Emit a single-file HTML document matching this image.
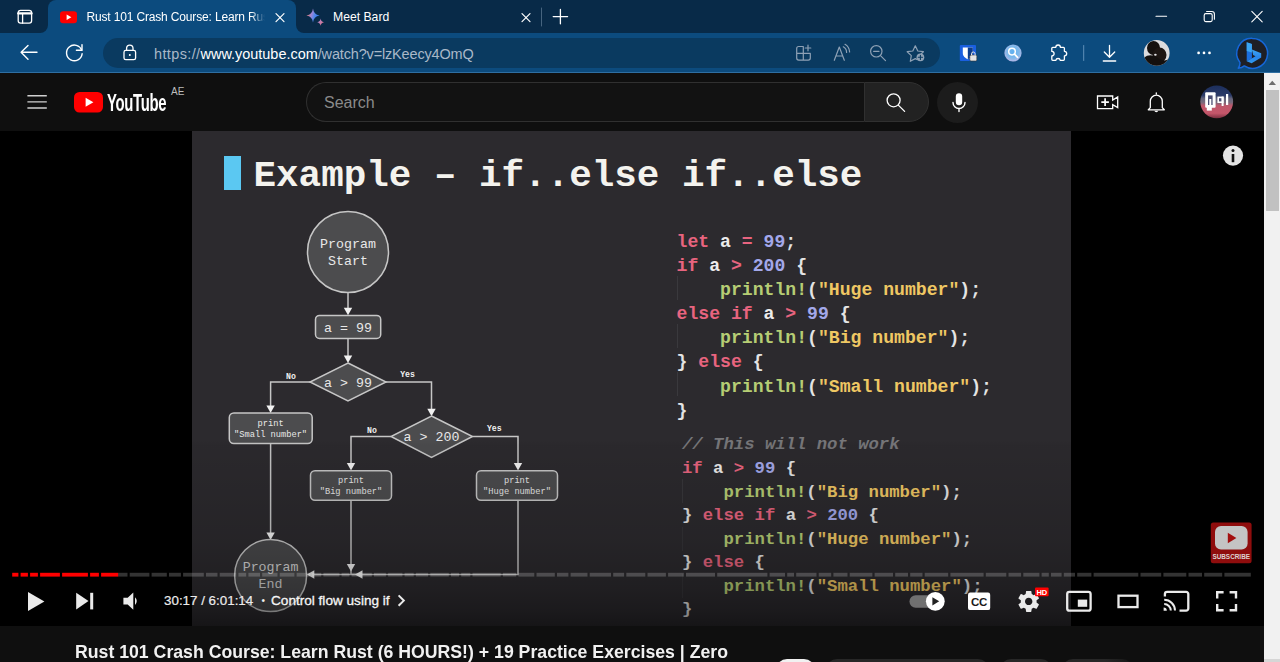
<!DOCTYPE html>
<html lang="en">
<head>
<meta charset="utf-8">
<title>Rust 101 Crash Course: Learn Rust</title>
<style>
*{box-sizing:border-box;margin:0;padding:0}
html,body{width:1280px;height:662px;overflow:hidden;background:#0f0f0f}
body{font-family:"Liberation Sans",sans-serif;position:relative;color:#fff}
.abs{position:absolute}
#tabbar{left:0;top:0;width:1280px;height:33px;background:#082a48}
#toolbar{left:0;top:33px;width:1280px;height:40px;background:#0c4b7e}
#toolbar-line{left:0;top:72px;width:1280px;height:1px;background:#2f6fa2}
#tab1{left:48px;top:0;width:248px;height:33px;background:#0c4b7e;border-radius:8px 8px 0 0}
.tabfoot{width:8px;height:8px;top:25px;background:#0c4b7e}
.tabfoot i{display:block;width:8px;height:8px;background:#082a48}
#tabfootL{left:40px}#tabfootL i{border-radius:0 0 8px 0}
#tabfootR{left:296px}#tabfootR i{border-radius:0 0 0 8px}
.tabtitle{font-size:12px;letter-spacing:-.16px;color:#fff;white-space:nowrap;top:10px;line-height:15px}
#addr{left:103px;top:38px;width:837px;height:30px;border-radius:15px;background:#0a3a60}
#url{left:154px;top:45.9px;font-size:14.45px;line-height:17px;color:#a9b8c8;white-space:nowrap}
#url b{font-weight:normal;color:#fff}
#ythead{left:0;top:73px;width:1264px;height:58px;background:#0f0f0f}
#player{left:0;top:131px;width:1264px;height:494.7px;background:#000;overflow:hidden}
#video{left:192px;top:0;width:879px;height:494.7px;background:#2c2a2e;overflow:hidden}
#below{left:0;top:625.7px;width:1264px;height:37px;background:#0f0f0f}
#scroll{left:1264px;top:73px;width:16px;height:589px;background:#f1f1f1}
#thumb{left:2px;top:17px;width:13px;height:121.4px;background:#c1c1c1}
.mono{font-family:"Liberation Mono",monospace;font-weight:bold}
#slidetitle{left:61.5px;top:23.2px;font-size:37.58px;line-height:44px;color:#f4f3ee;white-space:pre}
#bluebar{left:32px;top:24.5px;width:16.5px;height:34.5px;background:#5bc8f2}
pre.code{position:absolute;font-family:"Liberation Mono",monospace;font-weight:bold;white-space:pre;color:#ececec}
#code1{left:484.5px;top:98.7px;font-size:18.14px;line-height:24.15px}
#code2{left:490px;top:302.4px;font-size:17.28px;line-height:23.57px}
.k{color:#e8647f}.n{color:#a3a8ea}.f{color:#b6cd74}.s{color:#efc763}.c{color:#77777a;font-style:italic}.p{color:#e4e4e4}
#grad{left:0;bottom:0;width:1264px;height:186px;background:linear-gradient(to bottom,rgba(0,0,0,0) 0%,rgba(0,0,0,.04) 2.7%,rgba(0,0,0,.1) 32%,rgba(0,0,0,.15) 54%,rgba(0,0,0,.195) 64.600%,rgba(0,0,0,.29) 81%,rgba(0,0,0,.38) 91.500%,rgba(0,0,0,.5) 100%)}
#title{left:75px;top:640.4px;font-size:19px;font-weight:bold;line-height:24px;white-space:nowrap;color:#f1f1f1;transform-origin:0 50%;transform:scaleX(.9306)}
.chip{top:658.7px;height:36px;border-radius:11px;background:#272727}
#search{left:306px;top:8.8px;width:558px;height:40.6px;border:1px solid #303030;border-right:none;border-radius:20px 0 0 20px;background:#121212}
#searchbtn{left:864px;top:8.8px;width:65px;height:40.6px;border:1px solid #303030;border-radius:0 20px 20px 0;background:#222}
#mic{left:937px;top:8.6px;width:41px;height:41px;border-radius:20.5px;background:#1c1c1c}
#time{left:164px;top:461.6px;font-size:13.38px;line-height:16px;white-space:nowrap;color:#eee}
</style>
</head>
<body>
<!-- ===== browser chrome ===== -->
<div id="tabbar" class="abs"></div>
<div id="toolbar" class="abs"></div>
<div id="toolbar-line" class="abs"></div>
<div id="tabfootL" class="abs tabfoot"><i></i></div>
<div id="tabfootR" class="abs tabfoot"><i></i></div>
<div id="tab1" class="abs"></div>
<div class="abs tabtitle" id="t1" style="left:86.5px;width:178px;overflow:hidden;-webkit-mask-image:linear-gradient(to right,#000 92%,transparent 100%);mask-image:linear-gradient(to right,#000 92%,transparent 100%)">Rust 101 Crash Course: Learn Rust (6 HOURS!)</div>
<div class="abs tabtitle" id="t2" style="left:333px;font-size:12.2px;letter-spacing:0">Meet Bard</div>
<div id="addr" class="abs"></div>
<div id="url" class="abs"><span style="letter-spacing:.4px">https://</span><b>www.youtube.com</b><span style="letter-spacing:-.13px">/watch?v=lzKeecy4OmQ</span></div>
<!--CI0-->
<svg class="abs" style="left:0;top:0" width="1280" height="73" viewBox="0 0 1280 73" fill="none" stroke-linecap="round" stroke-linejoin="round">
<g stroke="#ffffff" stroke-width="1.3"><rect x="18.2" y="10.4" width="13.4" height="12.8" rx="2.4"/><path d="M18.2 13.4h13.4" stroke-width="2.2"/><path d="M22.6 13.4v9.8"/></g>
<rect x="60" y="11.2" width="17" height="12" rx="3.2" fill="#ff0000"/><path d="M66.6 14.4l4.8 2.8-4.8 2.8z" fill="#fff"/>
<path d="M276 13.7l8 8M284 13.7l-8 8" stroke="#ffffff" stroke-width="1.2"/>
<path d="M522 13.7l8 8M530 13.7l-8 8" stroke="#ffffff" stroke-width="1.2"/>
<defs><linearGradient id="bg1" x1="0" y1=".35" x2="1" y2=".65"><stop offset="0" stop-color="#ee7a62"/><stop offset=".38" stop-color="#9a86d8"/><stop offset=".62" stop-color="#4f86ec"/><stop offset="1" stop-color="#2f7cf0"/></linearGradient><linearGradient id="bg2" x1="0" y1="0" x2="1" y2="1"><stop offset="0" stop-color="#9b8ae0"/><stop offset="1" stop-color="#f0707a"/></linearGradient></defs>
<path d="M313 8.6c.5 4 2.6 6.3 6.6 6.9-4 .6-6.100 2.900-6.600 6.900-.5-4-2.600-6.300-6.600-6.900 4-.6 6.100-2.900 6.600-6.900z" fill="url(#bg1)"/>
<path d="M320.600 18.600c.3 2.100 1.300 3.200 3.400 3.600-2.100.4-3.100 1.500-3.400 3.600-.3-2.100-1.300-3.200-3.400-3.600 2.100-.4 3.100-1.500 3.400-3.600z" fill="url(#bg2)"/>
<path d="M541.5 8v18" stroke="#46647f" stroke-width="1"/>
<path d="M553.2 16.6h14.400M560.400 9.400v14.400" stroke="#ffffff" stroke-width="1.3"/>
<path d="M1156 16.300h10.600" stroke="#ffffff" stroke-width="1.1"/>
<rect x="1204.200" y="13.600" width="8" height="8" rx="1.600" stroke="#ffffff" stroke-width="1.100"/><path d="M1206.600 11.500h5.200a2.600 2.600 0 0 1 2.600 2.600v5.200" stroke="#ffffff" stroke-width="1.100"/>
<path d="M1251.800 11.400l10.400 10.400M1262.200 11.400l-10.400 10.400" stroke="#ffffff" stroke-width="1.100"/>
<path d="M37 52.300H21.200M28 45.400l-6.900 6.900 6.900 6.900" stroke="#ffffff" stroke-width="1.400"/>
<path d="M81.700 50.300a7.800 7.800 0 1 0 .4 3.500" stroke="#ffffff" stroke-width="1.400"/><path d="M82 44.600v5.600h-5.600" stroke="#ffffff" stroke-width="1.400"/>
<rect x="124" y="50.400" width="11.600" height="9.300" rx="1.800" stroke="#ffffff" stroke-width="1.300"/><path d="M126.600 50.200v-1.900a3.200 3.200 0 0 1 6.400 0v1.900" stroke="#ffffff" stroke-width="1.300"/><circle cx="129.800" cy="55" r="1" fill="#ffffff"/>
<g stroke="#8ea1b5" stroke-width="1.200"><path d="M803.300 46.500h-4.600a2 2 0 0 0-2 2v9.600a2 2 0 0 0 2 2h9.600a2 2 0 0 0 2-2v-4.700M803.300 46.500v13.600M796.700 53.400h13.600"/><path d="M808 45.200v5.600M805.200 48h5.600"/></g>
<g stroke="#8ea1b5" stroke-width="1.200"><path d="M834.300 60.300l5-13.300 5 13.300M836 56h6.600"/><path d="M843.300 46.800a6.500 6.500 0 0 1 3.300 5.600M845 44.300a9.500 9.500 0 0 1 4.600 7.700"/></g>
<g stroke="#8ea1b5" stroke-width="1.200"><circle cx="876.300" cy="51.300" r="5.700"/><path d="M880.500 55.600l5 5M873.600 51.300h5.400"/></g>
<path d="M915.300 45.800l2.500 5.200 5.600.700-4 3.900.5 2M915.300 45.800l-2.500 5.200-5.600.700 4.100 3.900-1 5.700 5-2.700 1.700.9" stroke="#8ea1b5" stroke-width="1.200"/><circle cx="920.400" cy="57.300" r="3.900" fill="#8ea1b5"/><path d="M918.300 57.300h4.200M920.400 55.200v4.200" stroke="#0a3a60" stroke-width="1.100"/>
<rect x="959.800" y="45" width="16.200" height="16" rx="1" fill="#1a5fe0"/><path d="M962.800 47.600h10v5.400c0 3.300-2.400 5-5 6.200-2.600-1.200-5-2.900-5-6.200z" fill="#fff" stroke="none"/><path d="M967.800 47.600h5v5.400c0 3.300-2.400 5-5 6.200z" fill="#0c3c8c" stroke="none"/><rect x="969.800" y="55" width="7" height="6" rx="1.200" fill="#e6e6e6" stroke="#333" stroke-width=".6"/><path d="M971.500 55v-1.200a1.800 1.800 0 0 1 3.600 0v1.200" stroke="#e6e6e6" stroke-width="1"/>
<defs><radialGradient id="sg" cx=".5" cy=".45" r=".6"><stop offset="0" stop-color="#5fb0f0"/><stop offset=".6" stop-color="#7fb8ea"/><stop offset="1" stop-color="#c7b7e6"/></radialGradient></defs><circle cx="1013" cy="53" r="8.600" fill="url(#sg)"/><circle cx="1012" cy="51.600" r="3.300" stroke="#fff" stroke-width="1.500"/><path d="M1014.500 54.200l3.100 3.200" stroke="#fff" stroke-width="1.700"/>
<path d="M1055.800 47.300a2.300 2.300 0 0 1 4.600 0h3a1 1 0 0 1 1 1v3a2.300 2.300 0 0 1 0 4.600v3.400a1 1 0 0 1-1 1h-3.100a2.300 2.300 0 0 0-4.500 0h-3a1 1 0 0 1-1-1v-3.300a2.300 2.300 0 0 0 0-4.600v-3.100a1 1 0 0 1 1-1z" stroke="#ffffff" stroke-width="1.300"/>
<path d="M1083.700 45.500v15" stroke="#5f8fb8" stroke-width="1"/>
<path d="M1109.500 45.300v11.600M1104.300 52l5.200 5.200 5.200-5.200M1103.300 61h12.400" stroke="#ffffff" stroke-width="1.300"/>
<defs><clipPath id="av"><circle cx="1156.700" cy="52.900" r="12.900"/></clipPath></defs><g clip-path="url(#av)"><rect x="1143" y="39" width="28" height="28" fill="#dcdcde"/><ellipse cx="1153.500" cy="48" rx="6.500" ry="7" fill="#15110f"/><ellipse cx="1159.500" cy="55" rx="7" ry="7.500" fill="#1d1613"/><path d="M1144 58c4-4 10-3 14 0s8 3 11 1v9h-25z" fill="#14100e"/><ellipse cx="1155.400" cy="54.800" rx="1.300" ry="1" fill="#e8e8ea"/></g>
<g fill="#ffffff"><circle cx="1198.600" cy="52.900" r="1.350"/><circle cx="1204" cy="52.900" r="1.350"/><circle cx="1209.500" cy="52.900" r="1.350"/></g>
<defs><linearGradient id="bb" x1="0" y1="0" x2="0" y2="1"><stop offset="0" stop-color="#3aa4f2"/><stop offset=".55" stop-color="#2a86ea"/><stop offset="1" stop-color="#2f9af0"/></linearGradient></defs>
<path d="M1252.600 38.400a15 15 0 1 1-8.300 27.500c-1.600 1.400-3.600 2.200-6 2.400 1.200-1.700 1.800-3.600 1.700-5.700a15 15 0 0 1 12.600-24.200z" fill="#1e1f25" stroke="#1667d9" stroke-width="1.500"/>
<path d="M1246.700 42.300l5.200 1.800v14.300l-5.200 2.800z" fill="#1b6fe0"/><path d="M1246.700 42.300l5.200 1.800v8.500l-5.200-1.500z" fill="#3aa4f2"/>
<path d="M1251.900 49.600l9.300 3.600v4.300l-9.600 5.700-4.900-2 8.800-5-2.400-1.100z" fill="url(#bb)"/>
</svg>
<!--CI1-->

<!-- ===== youtube header ===== -->
<div id="ythead" class="abs">
  <div id="search" class="abs"></div>
  <div class="abs" style="left:324px;top:19.600px;font-size:16px;line-height:20px;color:#8a8a8a">Search</div>
  <div id="searchbtn" class="abs"></div>
  <div id="mic" class="abs"></div>
  <!--YI0-->
<svg class="abs" style="left:0;top:0" width="1265" height="58" viewBox="0 73 1265 58" fill="none" stroke-linecap="round" stroke-linejoin="round">
<path d="M27.400 95.800h19.400M27.400 101.900h19.400M27.400 108h19.400" stroke="#d0d0d0" stroke-width="1.400" stroke-linecap="butt"/>
<rect x="74" y="92" width="29" height="20.500" rx="5.500" fill="#ff0000"/><path d="M85.600 97.700l7.800 4.500-7.800 4.500z" fill="#fff"/>
<circle cx="893.600" cy="100.300" r="6.500" stroke="#fff" stroke-width="1.300"/><path d="M898.300 105.100l6.300 6.300" stroke="#fff" stroke-width="1.300"/>
<rect x="955.800" y="93.200" width="6.400" height="12" rx="3.200" fill="#fff"/><path d="M953 102.500a6 6 0 0 0 12 0M959 108.600v3" stroke="#fff" stroke-width="1.400"/>
<path d="M1097.500 96h15.200v4l5-3v10.600l-5-3v4h-15.200z" stroke="#fff" stroke-width="1.300" stroke-linejoin="miter"/><path d="M1105.100 98.300v7.600M1101.300 102.100h7.600" stroke="#fff" stroke-width="1.700" stroke-linecap="butt"/>
<path d="M1156.300 92.800v1.200M1150.300 107.600v-6.400a6 6 0 0 1 12 0v6.400l2 2.200h-16z" stroke="#fff" stroke-width="1.300"/><path d="M1154.300 110.800a2.100 2.100 0 0 0 4 0z" fill="#fff"/>
<defs><linearGradient id="avg" x1="0" y1="0" x2="0" y2="1"><stop offset="0" stop-color="#1c2f5c"/><stop offset=".3" stop-color="#2a3a68"/><stop offset=".4" stop-color="#62637a"/><stop offset=".52" stop-color="#7a6a7c"/><stop offset=".62" stop-color="#c0586c"/><stop offset=".85" stop-color="#c4566a"/><stop offset="1" stop-color="#7a2f40"/></linearGradient></defs><circle cx="1216.700" cy="101.800" r="16.400" fill="url(#avg)"/>
<g fill="#fff"><rect x="1205.200" y="92.200" width="10.400" height="15.600" rx="1"/><rect x="1206.800" y="107" width="5" height="3.600"/><rect x="1217.400" y="96.600" width="6.200" height="6.400"/><rect x="1221.600" y="96.600" width="2" height="9.400"/><rect x="1226" y="94" width="2.200" height="11"/></g><g fill="#4b4f74"><rect x="1208" y="95.400" width="4.600" height="9.600"/><rect x="1219" y="98.200" width="2.400" height="3.200"/></g><rect x="1209.300" y="99" width="2" height="8.600" fill="#fff"/>
</svg>
<div class="abs" id="ytword" style="left:107px;top:15.500px;font-size:24px;line-height:28px;font-weight:bold;color:#fff;white-space:nowrap;transform-origin:0 50%;transform:scaleX(.62);letter-spacing:-.5px">YouTube</div>
<div class="abs" style="left:171px;top:13.300px;font-size:10px;line-height:12px;color:#bdbdbd;white-space:nowrap">AE</div>
<!--YI1-->
</div>

<!-- ===== player ===== -->
<div id="player" class="abs">
  <div id="video" class="abs">
    <div id="bluebar" class="abs"></div>
    <div id="slidetitle" class="abs mono">Example – if..else if..else</div>
    <!--FLOWSTART-->
<svg class="abs" style="left:0;top:0" width="878" height="494" viewBox="0 0 878 494" font-family="Liberation Mono, monospace" text-anchor="middle">
<g fill="none" stroke="#c6c6c6" stroke-width="1.5">
<polyline points="156.0,162.0 156.0,179.0"/>
<polyline points="156.0,207.4 156.0,227.0"/>
<polyline points="118.0,251.0 78.6,251.0 78.6,277.0"/>
<polyline points="194.0,251.0 239.5,251.0 239.5,280.0"/>
<polyline points="199.0,305.5 159.0,305.5 159.0,334.0"/>
<polyline points="280.5,305.5 326.0,305.5 326.0,334.0"/>
<polyline points="78.6,312.5 78.6,404.0"/>
<polyline points="159.0,369.6 159.0,443.5"/>
<polyline points="326.0,369.6 326.0,443.5 119.0,443.5"/>
</g>
<g fill="#f2f2f2" stroke="none">
<polygon points="156.0,184.2 151.8,176.7 160.2,176.7"/>
<polygon points="156.0,232.0 151.8,224.5 160.2,224.5"/>
<polygon points="78.6,282.0 74.4,274.5 82.8,274.5"/>
<polygon points="239.5,285.2 235.3,277.7 243.7,277.7"/>
<polygon points="159.0,339.6 154.8,332.1 163.2,332.1"/>
<polygon points="326.0,339.6 321.8,332.1 330.2,332.1"/>
<polygon points="78.6,409.0 74.4,401.5 82.8,401.5"/>
<polygon points="159.0,440.5 154.8,433.0 163.2,433.0"/>
<polygon points="163.0,443.5 170.5,439.3 170.5,447.7"/>
<polygon points="114.8,443.5 122.3,439.3 122.3,447.7"/>
</g>
<g fill="#4c4c4e" stroke="#c6c6c6" stroke-width="1.5">
<circle cx="156" cy="121" r="40.5"/>
<rect x="123.5" y="184.4" width="65.2" height="23.0" rx="4"/>
<polygon points="156.0,232.0 194.0,251.0 156.0,270.0 118.0,251.0"/>
<rect x="37.3" y="282.0" width="82.9" height="30.5" rx="4.5"/>
<polygon points="239.5,285.0 280.5,305.5 239.5,326.5 199.0,305.5"/>
<rect x="118.5" y="339.8" width="81.0" height="29.5" rx="4.5"/>
<rect x="284.5" y="339.8" width="81.0" height="29.5" rx="4.5"/>
<circle cx="78.6" cy="444.5" r="36" fill-opacity="0.92"/>
</g>
<text x="156.0" y="117.3" font-size="13.3" fill="#e8e8e8" font-weight="normal" xml:space="preserve">Program</text>
<text x="156.0" y="134.3" font-size="13.3" fill="#e8e8e8" font-weight="normal" xml:space="preserve">Start</text>
<text x="156.0" y="200.6" font-size="13.3" fill="#e8e8e8" font-weight="normal" xml:space="preserve">a = 99</text>
<text x="156.0" y="255.6" font-size="13.3" fill="#e8e8e8" font-weight="normal" xml:space="preserve">a &gt; 99</text>
<text x="239.5" y="310.2" font-size="13.3" fill="#e8e8e8" font-weight="normal" xml:space="preserve">a &gt; 200</text>
<text x="78.6" y="295.0" font-size="8.7" fill="#e8e8e8" font-weight="normal" xml:space="preserve">print</text>
<text x="78.6" y="306.0" font-size="8.7" fill="#e8e8e8" font-weight="normal" xml:space="preserve">"Small number"</text>
<text x="159.0" y="352.3" font-size="8.7" fill="#e8e8e8" font-weight="normal" xml:space="preserve">print</text>
<text x="159.0" y="363.0" font-size="8.7" fill="#e8e8e8" font-weight="normal" xml:space="preserve">"Big number"</text>
<text x="325.0" y="352.3" font-size="8.7" fill="#e8e8e8" font-weight="normal" xml:space="preserve">print</text>
<text x="325.0" y="363.0" font-size="8.7" fill="#e8e8e8" font-weight="normal" xml:space="preserve">"Huge number"</text>
<text x="78.6" y="440.2" font-size="13.3" fill="#d8d8d8" font-weight="normal" xml:space="preserve">Program</text>
<text x="78.6" y="457.4" font-size="13.3" fill="#d8d8d8" font-weight="normal" xml:space="preserve">End</text>
<text x="99.0" y="248.0" font-size="8.2" fill="#f0f0f0" font-weight="bold" xml:space="preserve">No</text>
<text x="215.5" y="246.0" font-size="8.2" fill="#f0f0f0" font-weight="bold" xml:space="preserve">Yes</text>
<text x="180.0" y="302.0" font-size="8.2" fill="#f0f0f0" font-weight="bold" xml:space="preserve">No</text>
<text x="302.3" y="300.0" font-size="8.2" fill="#f0f0f0" font-weight="bold" xml:space="preserve">Yes</text>
</svg>
<!--FLOWEND-->
<div class="abs" style="left:485px;top:145px;width:1px;height:24px;background:#3a393d"></div><div class="abs" style="left:485px;top:193px;width:1px;height:24px;background:#3a393d"></div><div class="abs" style="left:485px;top:241px;width:1px;height:24px;background:#3a393d"></div><div class="abs" style="left:490px;top:348px;width:1px;height:24px;background:#38373b"></div><div class="abs" style="left:490px;top:396px;width:1px;height:24px;background:#343337"></div><div class="abs" style="left:490px;top:443px;width:1px;height:24px;background:#343337"></div>
<pre class="code" id="code1"><span class="k">let</span> a <span class="k">=</span> <span class="n">99</span><span class="p">;</span>
<span class="k">if</span> a <span class="k">&gt;</span> <span class="n">200</span> <span class="p">{</span>
    <span class="f">println!</span><span class="p">(</span><span class="s">"Huge number"</span><span class="p">);</span>
<span class="k">else if</span> a <span class="k">&gt;</span> <span class="n">99</span> <span class="p">{</span>
    <span class="f">println!</span><span class="p">(</span><span class="s">"Big number"</span><span class="p">);</span>
<span class="p">}</span> <span class="k">else</span> <span class="p">{</span>
    <span class="f">println!</span><span class="p">(</span><span class="s">"Small number"</span><span class="p">);</span>
<span class="p">}</span></pre>
<pre class="code" id="code2"><span class="c">// This will not work</span>
<span class="k">if</span> a <span class="k">&gt;</span> <span class="n">99</span> <span class="p">{</span>
    <span class="f">println!</span><span class="p">(</span><span class="s">"Big number"</span><span class="p">);</span>
<span class="p">}</span> <span class="k">else if</span> a <span class="k">&gt;</span> <span class="n">200</span> <span class="p">{</span>
    <span class="f">println!</span><span class="p">(</span><span class="s">"Huge number"</span><span class="p">);</span>
<span class="p">}</span> <span class="k">else</span> <span class="p">{</span>
    <span class="f">println!</span><span class="p">(</span><span class="s">"Small number"</span><span class="p">);</span>
<span class="p">}</span></pre>
  </div>
  <div id="grad" class="abs"></div>
  <!--CT0-->
<svg class="abs" style="left:0;top:0" width="1265" height="494" viewBox="0 131 1265 494" fill="none" font-family="Liberation Sans, sans-serif">
<rect x="12.2" y="572.8" width="6.2" height="3.8" fill="#ff0000"/>
<rect x="20.6" y="572.8" width="7.3" height="3.8" fill="#ff0000"/>
<rect x="30.1" y="572.8" width="7.8" height="3.8" fill="#ff0000"/>
<rect x="40.1" y="572.8" width="19.8" height="3.8" fill="#ff0000"/>
<rect x="62.1" y="572.8" width="25.8" height="3.8" fill="#ff0000"/>
<rect x="90.1" y="572.8" width="8.8" height="3.8" fill="#ff0000"/>
<rect x="101.1" y="572.8" width="17.1" height="3.8" fill="#ff0000"/>
<rect x="118.2" y="572.8" width="9.3" height="3.8" fill="#fff" fill-opacity=".2"/>
<rect x="129.7" y="572.8" width="19.7" height="3.8" fill="#fff" fill-opacity=".2"/>
<rect x="151.6" y="572.8" width="15.2" height="3.8" fill="#fff" fill-opacity=".2"/>
<rect x="169.0" y="572.8" width="11.9" height="3.8" fill="#fff" fill-opacity=".2"/>
<rect x="183.1" y="572.8" width="20.7" height="3.8" fill="#fff" fill-opacity=".2"/>
<rect x="206.0" y="572.8" width="11.5" height="3.8" fill="#fff" fill-opacity=".2"/>
<rect x="219.7" y="572.8" width="16.5" height="3.8" fill="#fff" fill-opacity=".2"/>
<rect x="238.4" y="572.8" width="7.8" height="3.8" fill="#fff" fill-opacity=".2"/>
<rect x="248.4" y="572.8" width="11.6" height="3.8" fill="#fff" fill-opacity=".2"/>
<rect x="262.2" y="572.8" width="15.3" height="3.8" fill="#fff" fill-opacity=".2"/>
<rect x="279.7" y="572.8" width="14.7" height="3.8" fill="#fff" fill-opacity=".2"/>
<rect x="296.6" y="572.8" width="13.4" height="3.8" fill="#fff" fill-opacity=".2"/>
<rect x="312.2" y="572.8" width="9.0" height="3.8" fill="#fff" fill-opacity=".2"/>
<rect x="323.4" y="572.8" width="16.0" height="3.8" fill="#fff" fill-opacity=".2"/>
<rect x="341.6" y="572.8" width="7.8" height="3.8" fill="#fff" fill-opacity=".2"/>
<rect x="351.6" y="572.8" width="20.2" height="3.8" fill="#fff" fill-opacity=".2"/>
<rect x="374.0" y="572.8" width="11.9" height="3.8" fill="#fff" fill-opacity=".2"/>
<rect x="388.1" y="572.8" width="14.3" height="3.8" fill="#fff" fill-opacity=".2"/>
<rect x="404.6" y="572.8" width="9.1" height="3.8" fill="#fff" fill-opacity=".2"/>
<rect x="415.9" y="572.8" width="12.2" height="3.8" fill="#fff" fill-opacity=".2"/>
<rect x="430.3" y="572.8" width="18.5" height="3.8" fill="#fff" fill-opacity=".2"/>
<rect x="451.0" y="572.8" width="8.0" height="3.8" fill="#fff" fill-opacity=".2"/>
<rect x="461.2" y="572.8" width="9.1" height="3.8" fill="#fff" fill-opacity=".2"/>
<rect x="472.5" y="572.8" width="28.2" height="3.8" fill="#fff" fill-opacity=".2"/>
<rect x="502.9" y="572.8" width="13.3" height="3.8" fill="#fff" fill-opacity=".2"/>
<rect x="518.4" y="572.8" width="15.9" height="3.8" fill="#fff" fill-opacity=".2"/>
<rect x="536.5" y="572.8" width="18.3" height="3.8" fill="#fff" fill-opacity=".2"/>
<rect x="557.0" y="572.8" width="11.4" height="3.8" fill="#fff" fill-opacity=".2"/>
<rect x="570.6" y="572.8" width="16.9" height="3.8" fill="#fff" fill-opacity=".2"/>
<rect x="589.7" y="572.8" width="21.3" height="3.8" fill="#fff" fill-opacity=".2"/>
<rect x="613.2" y="572.8" width="10.9" height="3.8" fill="#fff" fill-opacity=".2"/>
<rect x="626.3" y="572.8" width="19.0" height="3.8" fill="#fff" fill-opacity=".2"/>
<rect x="647.5" y="572.8" width="18.4" height="3.8" fill="#fff" fill-opacity=".2"/>
<rect x="668.1" y="572.8" width="15.7" height="3.8" fill="#fff" fill-opacity=".2"/>
<rect x="686.0" y="572.8" width="29.0" height="3.8" fill="#fff" fill-opacity=".2"/>
<rect x="717.2" y="572.8" width="50.2" height="3.8" fill="#fff" fill-opacity=".2"/>
<rect x="769.6" y="572.8" width="15.4" height="3.8" fill="#fff" fill-opacity=".2"/>
<rect x="787.2" y="572.8" width="6.8" height="3.8" fill="#fff" fill-opacity=".2"/>
<rect x="796.2" y="572.8" width="20.3" height="3.8" fill="#fff" fill-opacity=".2"/>
<rect x="818.7" y="572.8" width="12.5" height="3.8" fill="#fff" fill-opacity=".2"/>
<rect x="833.4" y="572.8" width="14.1" height="3.8" fill="#fff" fill-opacity=".2"/>
<rect x="849.7" y="572.8" width="22.7" height="3.8" fill="#fff" fill-opacity=".2"/>
<rect x="874.6" y="572.8" width="18.4" height="3.8" fill="#fff" fill-opacity=".2"/>
<rect x="895.2" y="572.8" width="12.8" height="3.8" fill="#fff" fill-opacity=".2"/>
<rect x="910.2" y="572.8" width="12.3" height="3.8" fill="#fff" fill-opacity=".2"/>
<rect x="924.7" y="572.8" width="23.5" height="3.8" fill="#fff" fill-opacity=".2"/>
<rect x="950.4" y="572.8" width="33.2" height="3.8" fill="#fff" fill-opacity=".2"/>
<rect x="985.8" y="572.8" width="20.5" height="3.8" fill="#fff" fill-opacity=".2"/>
<rect x="1008.5" y="572.8" width="12.6" height="3.8" fill="#fff" fill-opacity=".2"/>
<rect x="1023.3" y="572.8" width="16.1" height="3.8" fill="#fff" fill-opacity=".2"/>
<rect x="1041.6" y="572.8" width="7.2" height="3.8" fill="#fff" fill-opacity=".2"/>
<rect x="1051.0" y="572.8" width="10.6" height="3.8" fill="#fff" fill-opacity=".2"/>
<rect x="1063.8" y="572.8" width="11.2" height="3.8" fill="#fff" fill-opacity=".2"/>
<rect x="1077.2" y="572.8" width="14.2" height="3.8" fill="#fff" fill-opacity=".2"/>
<rect x="1093.6" y="572.8" width="44.7" height="3.8" fill="#fff" fill-opacity=".2"/>
<rect x="1140.5" y="572.8" width="20.7" height="3.8" fill="#fff" fill-opacity=".2"/>
<rect x="1163.4" y="572.8" width="22.9" height="3.8" fill="#fff" fill-opacity=".2"/>
<rect x="1188.5" y="572.8" width="13.5" height="3.8" fill="#fff" fill-opacity=".2"/>
<rect x="1204.2" y="572.8" width="18.0" height="3.8" fill="#fff" fill-opacity=".2"/>
<rect x="1224.4" y="572.8" width="26.4" height="3.8" fill="#fff" fill-opacity=".2"/>
<path d="M28 592v19l16.400-9.500z" fill="#eaeaea"/>
<path d="M76.200 592.800v16.600l12.300-8.300z" fill="#eaeaea"/><rect x="90.200" y="592.800" width="3" height="16.600" fill="#eaeaea"/>
<path d="M123.400 597.800h4.300l5.600-5.400v17.400l-5.600-5.400h-4.300z" fill="#eaeaea"/><path d="M135 597.300a5 5 0 0 1 0 7.600z" fill="#eaeaea"/>
<path d="M398.600 595.400l5.200 5.200-5.200 5.200" stroke="#eaeaea" stroke-width="2"/>
<rect x="909.500" y="595.300" width="33" height="12.400" rx="6.200" fill="#8c8c8c" fill-opacity=".75"/><circle cx="935.300" cy="601.300" r="9.400" fill="#fff"/><path d="M932.400 597.200v8.200l6.800-4.100z" fill="#222"/>
<rect x="968" y="592.500" width="22.200" height="17.600" rx="2.200" fill="#fff"/>
<text x="979.100" y="605.600" font-size="11.500" font-weight="bold" fill="#1b1b1b" text-anchor="middle" letter-spacing="-.3">CC</text>
<path transform="translate(1004.94 577.64) scale(1.32)" d="m 23.94,18.78 c .03,-0.25 .05,-0.51 .05,-0.78 0,-0.27 -0.02,-0.52 -0.05,-0.78 l 1.68,-1.32 c .15,-0.12 .19,-0.33 .09,-0.51 l -1.6,-2.76 c -0.09,-0.17 -0.31,-0.24 -0.48,-0.17 l -1.99,.8 c -0.41,-0.32 -0.86,-0.58 -1.35,-0.78 l -0.30,-2.12 c -0.02,-0.19 -0.19,-0.33 -0.39,-0.33 l -3.2,0 c -0.2,0 -0.36,.14 -0.39,.33 l -0.30,2.12 c -0.48,.2 -0.93,.47 -1.35,.78 l -1.99,-0.8 c -0.18,-0.07 -0.39,0 -0.48,.17 l -1.6,2.76 c -0.10,.17 -0.05,.39 .09,.51 l 1.68,1.32 c -0.03,.25 -0.05,.52 -0.05,.78 0,.26 .02,.52 .05,.78 l -1.68,1.32 c -0.15,.12 -0.19,.33 -0.09,.51 l 1.6,2.76 c .09,.17 .31,.24 .48,.17 l 1.99,-0.8 c .41,.32 .86,.58 1.35,.78 l .30,2.12 c .02,.19 .19,.33 .39,.33 l 3.2,0 c .2,0 .36,-0.14 .39,-0.33 l .30,-2.12 c .48,-0.2 .93,-0.47 1.35,-0.78 l 1.99,.8 c .18,.07 .39,0 .48,-0.17 l 1.6,-2.76 c .09,-0.17 .05,-0.39 -0.09,-0.51 l -1.68,-1.32 0,0 z m -5.94,2.01 c -1.54,0 -2.8,-1.25 -2.8,-2.8 0,-1.54 1.25,-2.8 2.8,-2.8 1.54,0 2.8,1.25 2.8,2.8 0,1.54 -1.25,2.8 -2.8,2.8 l 0,0 z" fill="#eaeaea" fill-rule="evenodd"/>
<rect x="1035" y="587.600" width="13.600" height="8.600" rx="1" fill="#f00"/><text x="1041.800" y="594.700" font-size="7.500" font-weight="bold" fill="#fff" text-anchor="middle" letter-spacing="-.2">HD</text>
<rect x="1067.200" y="591.800" width="23.400" height="18.800" rx="2.200" stroke="#eaeaea" stroke-width="2.300"/><rect x="1077.800" y="599.600" width="9.400" height="7.200" fill="#eaeaea"/>
<rect x="1118.500" y="595.700" width="19" height="11.400" stroke="#eaeaea" stroke-width="2.300"/>
<path d="M1164.900 596.500v-2.500a2.200 2.200 0 0 1 2.200-2.200h19a2.200 2.200 0 0 1 2.200 2.200v14.400a2.200 2.200 0 0 1-2.200 2.200h-6.600" stroke="#eaeaea" stroke-width="2.300"/><path d="M1164.200 599.800a10.800 10.800 0 0 1 10.800 10.800M1164.200 604a6.600 6.600 0 0 1 6.600 6.600" stroke="#eaeaea" stroke-width="2"/><path d="M1163.600 607.600a3.200 3.200 0 0 1 3.200 3.200h-3.200z" fill="#eaeaea"/>
<path d="M1217.200 598.400v-6.200h6.400M1229.600 592.200h6.400v6.200M1236 604v6.200h-6.400M1223.600 610.200h-6.400v-6.200" stroke="#eaeaea" stroke-width="2.400"/>
<circle cx="1233" cy="155.600" r="10.100" fill="#e4e4e4"/><rect x="1231.700" y="154" width="2.600" height="8.200" fill="#111"/><circle cx="1233" cy="150.600" r="1.500" fill="#111"/>
<rect x="1210.800" y="522.400" width="40.800" height="40.800" rx="2.500" fill="#8f0d0d"/><rect x="1215" y="526" width="32.600" height="23.600" rx="6" fill="#c4c4c4"/><path d="M1227.800 532.800v10.400l8.600-5.200z" fill="#a30f0f"/>
<text x="1231.200" y="558.800" font-size="6.400" font-weight="bold" fill="#dcd2d2" text-anchor="middle">SUBSCRIBE</text>
</svg>
<!--CT1-->
  <div id="time" class="abs"><span id="tm" style="-webkit-text-stroke:.2px #e6e6e6">30:17 / 6:01:14</span><span id="dot" style="position:absolute;left:97.6px;top:0;font-size:10px">•</span><span id="chap" style="position:absolute;left:107px;top:0;font-size:13.6px;-webkit-text-stroke:.3px #fff">Control flow using if</span></div>
</div>

<!-- ===== below ===== -->
<div id="below" class="abs"></div>
<div id="title" class="abs">Rust 101 Crash Course: Learn Rust (6 HOURS!) + 19 Practice Exercises | Zero</div>
<div class="abs chip" style="left:776px;width:39px;background:#f1f1f1"></div>
<div class="abs chip" style="left:825.6px;width:163.4px"></div>
<div class="abs chip" style="left:999.5px;width:52px"></div>
<div class="abs chip" style="left:1061.5px;width:71px;background:linear-gradient(to right,#272727 60%,#151515)"></div>

<!-- ===== scrollbar ===== -->
<div id="scroll" class="abs"><div id="thumb" class="abs"></div><svg class="abs" style="left:0;top:0" width="16" height="17"><path d="M4.600 12l3.700-4.300 3.700 4.300z" fill="#6e6e6e"/></svg><div class="abs" style="left:0;bottom:0;width:16px;height:3px;background:#d6d6d6"></div></div>
</body>
</html>
